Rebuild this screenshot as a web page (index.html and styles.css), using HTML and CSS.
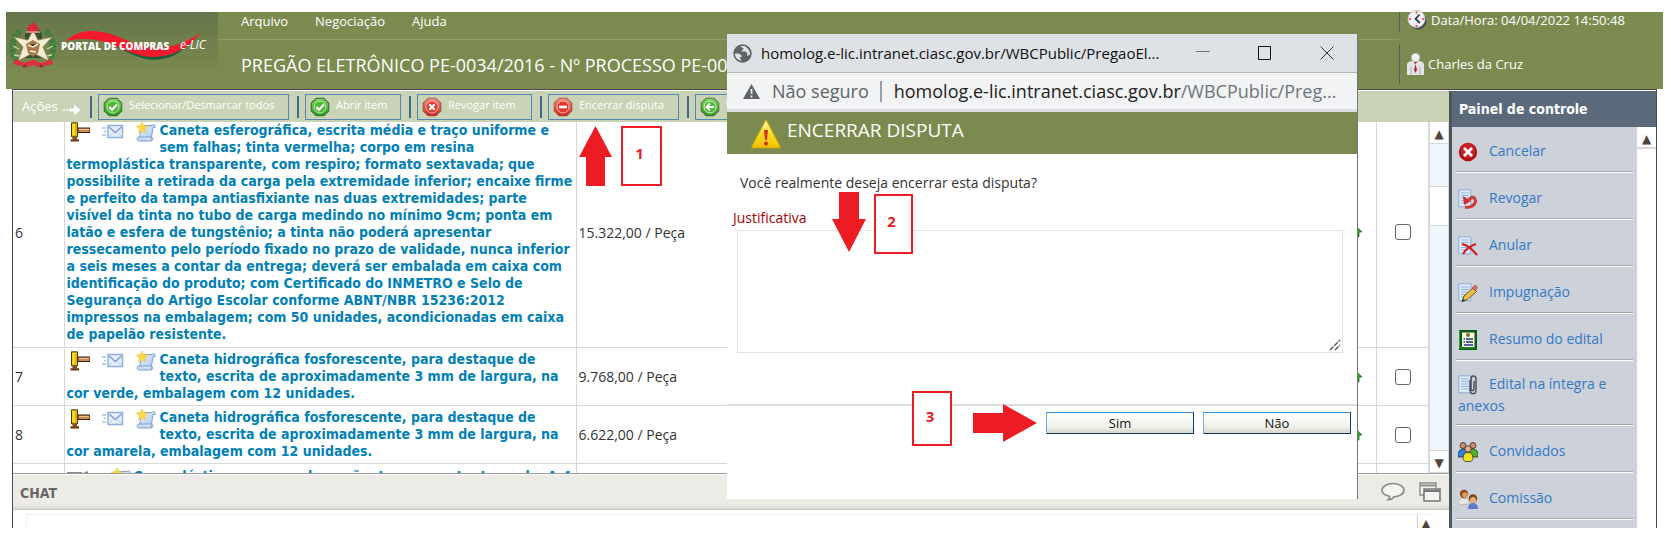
FILE: index.html
```html
<!DOCTYPE html>
<html lang="pt-BR">
<head>
<meta charset="utf-8">
<meta name="viewport" content="width=device-width, initial-scale=1">
<title>Portal de Compras e-LIC</title>
<link rel="stylesheet" href="styles.css">
</head>
<body>
<svg class="defs" aria-hidden="true">
  <defs>
    <linearGradient id="g-green" x1="0" y1="0" x2="0" y2="1"><stop offset="0" stop-color="#7fd35c"/><stop offset="1" stop-color="#2f9a26"/></linearGradient>
    <linearGradient id="g-red" x1="0" y1="0" x2="0" y2="1"><stop offset="0" stop-color="#f79084"/><stop offset="1" stop-color="#d8241c"/></linearGradient>
    <linearGradient id="g-warn" x1="0" y1="0" x2="0" y2="1"><stop offset="0" stop-color="#fff6b0"/><stop offset=".5" stop-color="#f7dc2a"/><stop offset="1" stop-color="#f0bf00"/></linearGradient>
    <linearGradient id="g-page" x1="0" y1="0" x2="1" y2="1"><stop offset="0" stop-color="#e9f2ff"/><stop offset="1" stop-color="#a9c6ee"/></linearGradient>
  </defs>
  <symbol id="gavel" viewBox="0 0 20 20">
    <path d="M8 6h12v4.500H8z" fill="#c98a56" stroke="#3a1c0c"/><path d="M9 7.500h10" stroke="#f0bd8c"/>
    <path d="M1.500 .8h6v14h-6z" fill="#e8b800" stroke="#4a3a00"/><path d="M3.500 2v11" stroke="#ffe23a" stroke-width="2"/>
    <path d="M2.500 15h4.500v2.500H2.500z" fill="#8a4a20"/><path d="M.5 17.300h8.500v2.200H.5z" fill="#6b3212"/>
  </symbol>
  <symbol id="mail" viewBox="0 0 22 16">
    <path d="M0 4h4M2 7.500h2M0 11h4" stroke="#a9c4ea" stroke-width="1.500"/>
    <path d="M6 1.500h14.500v12H6z" fill="#e6f0fd" stroke="#8fb0de" stroke-width="1.500"/>
    <path d="M7 3l6.300 5.500L19.500 3" fill="none" stroke="#7d9fd4" stroke-width="1.500"/><path d="M7 12.500l4-4M19.500 12.500l-4-4" fill="none" stroke="#b4cbec" stroke-width="1"/>
  </symbol>
  <symbol id="scroll" viewBox="0 0 20 20">
    <path d="M5 3.500h11c2-2 4 0 3 2h-2l-1.500 9.500c2 .5 1.500 4-.5 4H3c-2.500 0-2.500-4 0-4h1z" fill="url(#g-page)" stroke="#7f9fd2"/>
    <path d="M3 15h11c2 0 1.500 3.500 0 3.500" fill="#d6e5fa" stroke="#7f9fd2"/>
    <path d="M6 0l1.800 3.600 4 .5-3 2.800.8 4L6 9 2.500 10.900l.7-4-3-2.800 4-.5z" fill="#ffd84a" stroke="#e8b83a" stroke-width=".5"/>
  </symbol>
  <symbol id="ok" viewBox="0 0 20 20">
    <path d="M6 .7h8L19.300 6v8L14 19.300H6L.7 14V6z" fill="#4d5c4a"/><path d="M6.300 1.500h7.400l4.800 4.800v7.400l-4.800 4.800H6.300l-4.800-4.800V6.300z" fill="url(#g-green)" stroke="#2c7a24" stroke-width=".6"/>
    <circle cx="10" cy="10" r="6" fill="#4fb83a" stroke="#b9eaa8" stroke-width="1"/><path d="M6.300 10l2.700 2.800L14 7.600" fill="none" stroke="#fff" stroke-width="2.200"/>
  </symbol>
  <symbol id="back" viewBox="0 0 20 20">
    <path d="M6 .7h8L19.300 6v8L14 19.300H6L.7 14V6z" fill="#4d5c4a"/><path d="M6.300 1.500h7.400l4.800 4.800v7.400l-4.800 4.800H6.300l-4.800-4.800V6.300z" fill="url(#g-green)"/>
    <circle cx="10" cy="10" r="6" fill="#4fb83a" stroke="#d4f3c8"/><path d="M14 10H6.500M10 6.500L6.500 10l3.500 3.500" fill="none" stroke="#fff" stroke-width="2"/>
  </symbol>
  <symbol id="cross" viewBox="0 0 20 20">
    <path d="M6 .7h8L19.300 6v8L14 19.300H6L.7 14V6z" fill="#8d4b46"/><path d="M6.300 1.500h7.400l4.800 4.800v7.400l-4.800 4.800H6.300l-4.800-4.800V6.300z" fill="url(#g-red)"/>
    <circle cx="10" cy="10" r="6" fill="#e2382e" stroke="#f7b5ae"/><path d="M7.300 7.300l5.400 5.400M12.700 7.300l-5.400 5.400" stroke="#fff" stroke-width="2.200"/>
  </symbol>
  <symbol id="minus" viewBox="0 0 20 20">
    <path d="M6 .7h8L19.300 6v8L14 19.300H6L.7 14V6z" fill="#8d4b46"/><path d="M6.300 1.500h7.400l4.800 4.800v7.400l-4.800 4.800H6.300l-4.800-4.800V6.300z" fill="url(#g-red)"/>
    <circle cx="10" cy="10" r="6" fill="#e2382e" stroke="#f7b5ae"/><path d="M6 10h8" stroke="#fff" stroke-width="2.600"/>
  </symbol>
  <symbol id="up-green" viewBox="0 0 12 12"><path d="M6 0l6 6H9v5H3V6H0z" fill="#2fae1c" stroke="#14740c" stroke-width=".8"/></symbol>
  <symbol id="sheet" viewBox="0 0 20 20"><path d="M.8.800h12v17h-12z" fill="#dfeafb" stroke="#8ea9d8"/><path d="M3 4h8M3 6.500h8M3 9h8M3 11.500h8M3 14h8" stroke="#8fb3ea"/></symbol>
</svg>

<div class="app">
  <header class="header">
    <div class="brand">
      <svg width="212" height="77" viewBox="0 0 212 77" role="img" aria-label="Portal de Compras e-LIC">
        <g>
          <path d="M14 19C4 27 4 44 12 50M40 19c9 8 9 25 2 31" fill="none" stroke="#3f7f3c" stroke-width="6" stroke-dasharray="4 1"/>
          <path d="M8 25l6 5M7 34l6 3M8 43l6 1M46 25l-6 5M47 34l-6 3M46 43l-6 1" stroke="#c9dc9c" stroke-width="1.300"/>
          <path d="M19 22l6-9h5l6 9v24H19z" fill="#38522f"/>
          <path d="M27 18l5 10 14-3-9 10 6 14-16-8-15 8 5-14-9-10 14 3z" fill="#f2ecd2" stroke="#8b7c4a" stroke-width=".8"/>
          <path d="M20 32l7-4 7 4-2 9-5 4-5-4z" fill="#a87848"/><path d="M22 33l5 2 5-3M24 39l6 1" stroke="#fff2cf" stroke-width="1.500"/>
          <path d="M21 16l4-4 2-2 2 2 4 4-2 5h-8z" fill="#d8283a"/><path d="M20 20h14" stroke="#ffd4c8"/>
          <path d="M10 47l8 4 9-3 9 3 9-4 2 5-9 2-3 2-8-3-8 3-4-2-8-2z" fill="#e0303f"/>
          <path d="M20 53l-3 2M34 53l3 2" stroke="#3d5528" stroke-width="2"/>
        </g>
        <path d="M66 27C86 15 106 20 124 31c20 12 40 11 58 2-13 14-31 17-46 13-24-7-40-26-70-19z" fill="#17603a"/>
        <path d="M60 29C76 14 98 18 120 28c28 13 54 8 74-7-12 17-34 27-56 23-26-5-40-23-78-15z" fill="#f5192c"/>
        <text x="55" y="38" class="brand-name">PORTAL DE COMPRAS</text>
        <text x="174" y="37" class="brand-tag">e-LIC</text>
      </svg>
    </div>
    <div class="header-mid">
      <nav class="menu" aria-label="Principal"><a href="#">Arquivo</a><a href="#">Negociação</a><a href="#">Ajuda</a></nav>
      <h1 class="title">PREGÃO ELETRÔNICO PE-0034/2016 - Nº PROCESSO PE-0034/2016</h1>
    </div>
    <div class="session">
      <div class="session-row clock">
        <svg width="20" height="20" viewBox="0 0 20 20"><circle cx="11" cy="11" r="8.500" fill="#3d4654"/><circle cx="9.500" cy="9" r="8.500" fill="#f4f4f6" stroke="#c4c6cc"/><path d="M12.500 4.500L8.500 9l4.500 4" fill="none" stroke="#343a44" stroke-width="1.800"/><path d="M9.500 1.500v2M9.500 15v2M2 9h2M15 9h2" stroke="#e33" stroke-width="1.600"/></svg>
        <span>Data/Hora: 04/04/2022 14:50:48</span>
      </div>
      <div class="session-row user">
        <svg width="17" height="23" viewBox="0 0 17 23"><path d="M0 22V12c0-3 3-4 5-4h7c2 0 5 1 5 4v10z" fill="#e4e4e8"/><path d="M4 14v8M13 14v8" stroke="#a9adb5"/><path d="M6.500 9l2 2-1.500 6 1.500 3 1.500-3L8.500 11l2-2z" fill="#b8242c"/><circle cx="8.500" cy="4.500" r="4.200" fill="#f2f2f5" stroke="#b4b9c2"/></svg>
        <span>Charles da Cruz</span>
      </div>
    </div>
  </header>

  <div class="content">
    <main class="work">
      <div class="toolbar">
        <span class="toolbar-label">Ações</span>
        <svg width="20" height="20" viewBox="0 0 20 20"><path d="M1 13h2M4 13h2" stroke="#fff" stroke-width="1.500"/><path d="M7 11.500h5V7.500L18.500 13 12 18.500v-4H7z" fill="#fff"/></svg>
        <i class="sep"></i><button type="button" class="tool t-all"><svg class="ic"><use href="#ok"/></svg>Selecionar/Desmarcar todos</button>
        <i class="sep"></i><button type="button" class="tool t-open"><svg class="ic"><use href="#ok"/></svg>Abrir item</button>
        <i class="sep"></i><button type="button" class="tool t-revoke"><svg class="ic"><use href="#cross"/></svg>Revogar item</button>
        <i class="sep"></i><button type="button" class="tool t-close"><svg class="ic"><use href="#minus"/></svg>Encerrar disputa</button>
        <i class="sep"></i><button type="button" class="tool"><svg class="ic"><use href="#back"/></svg>Voltar</button>
      </div>

      <div class="list">
        <div class="list-view">
          <table class="items">
            <colgroup><col class="c-num"><col class="c-desc"><col class="c-qty"><col class="c-trend"><col class="c-check"></colgroup>
            <tbody>
              <tr class="r6">
                <td>6</td>
                <td class="desc"><span class="marks"><svg class="ic"><use href="#gavel"/></svg><svg class="ic-mail"><use href="#mail"/></svg><svg class="ic"><use href="#scroll"/></svg></span><a href="#">Caneta esferográfica, escrita média e traço uniforme e<br>sem falhas; tinta vermelha; corpo em resina<br>termoplástica transparente, com respiro; formato sextavada; que<br>possibilite a retirada da carga pela extremidade inferior; encaixe firme<br>e perfeito da tampa antiasfixiante nas duas extremidades; parte<br>visível da tinta no tubo de carga medindo no mínimo 9cm; ponta em<br>latão e esfera de tungstênio; a tinta não poderá apresentar<br>ressecamento pelo período fixado no prazo de validade, nunca inferior<br>a seis meses a contar da entrega; deverá ser embalada em caixa com<br>identificação do produto; com Certificado do INMETRO e Selo de<br>Segurança do Artigo Escolar conforme ABNT/NBR 15236:2012<br>impressos na embalagem; com 50 unidades, acondicionadas em caixa<br>de papelão resistente.</a></td>
                <td>15.322,00 / Peça</td>
                <td class="trend"><svg width="12" height="12"><use href="#up-green"/></svg></td>
                <td class="check"><input type="checkbox" aria-label="Selecionar item 6"></td>
              </tr>
              <tr>
                <td>7</td>
                <td class="desc"><span class="marks"><svg class="ic"><use href="#gavel"/></svg><svg class="ic-mail"><use href="#mail"/></svg><svg class="ic"><use href="#scroll"/></svg></span><a href="#">Caneta hidrográfica fosforescente, para destaque de<br>texto, escrita de aproximadamente 3 mm de largura, na<br>cor verde, embalagem com 12 unidades.</a></td>
                <td>9.768,00 / Peça</td>
                <td class="trend"><svg width="12" height="12"><use href="#up-green"/></svg></td>
                <td class="check"><input type="checkbox" aria-label="Selecionar item 7"></td>
              </tr>
              <tr>
                <td>8</td>
                <td class="desc"><span class="marks"><svg class="ic"><use href="#gavel"/></svg><svg class="ic-mail"><use href="#mail"/></svg><svg class="ic"><use href="#scroll"/></svg></span><a href="#">Caneta hidrográfica fosforescente, para destaque de<br>texto, escrita de aproximadamente 3 mm de largura, na<br>cor amarela, embalagem com 12 unidades.</a></td>
                <td>6.622,00 / Peça</td>
                <td class="trend"><svg width="12" height="12"><use href="#up-green"/></svg></td>
                <td class="check"><input type="checkbox" aria-label="Selecionar item 8"></td>
              </tr>
              <tr class="last">
                <td></td>
                <td class="desc"><span class="marks short"><svg width="22" height="14" viewBox="0 0 22 14"><path d="M0 2h14v6H0M14 4l7-3" fill="none" stroke="#8a8a8a" stroke-width="2"/></svg><svg class="ic"><use href="#scroll"/></svg></span><a href="#">Capa plástica para encadernação, transparente, tamanho A-4,</a></td>
                <td></td><td></td><td></td>
              </tr>
            </tbody>
          </table>
        </div>
        <div class="scrollbar" aria-hidden="true"><span class="sb-btn">▲</span><span class="sb-gap"></span><span class="sb-thumb"></span><span class="sb-track"></span><span class="sb-btn">▼</span></div>
      </div>

      <section class="chat">
        <div class="chat-bar">
          <h2>CHAT</h2>
          <svg width="24" height="20" viewBox="0 0 24 20"><path d="M12 1.500c6 0 11 3 11 6.700s-5 6.600-10 6.600c-1 1.500-3 3-6 3 1.500-1.200 2-2.500 1.500-3.600C4 13.300 1 11.300 1 8.200 1 4.500 6 1.500 12 1.500z" fill="#f4f4f0" stroke="#8b8b88" stroke-width="1.600"/></svg>
          <svg width="22" height="20" viewBox="0 0 22 20"><path d="M1 1h16v12H1z" fill="#f4f4f0" stroke="#8b8b88" stroke-width="1.400"/><path d="M1 3.500h16" stroke="#8b8b88" stroke-width="2"/><path d="M5 7h16v12H5z" fill="#f4f4f0" stroke="#777" stroke-width="1.600"/><path d="M5 9h16" stroke="#777" stroke-width="2"/></svg>
        </div>
        <div class="chat-body"><div class="chat-log"><span class="chat-scroll" aria-hidden="true">▲</span></div></div>
      </section>
    </main>

    <aside class="panel">
      <h2 class="panel-title">Painel de controle</h2>
      <div class="panel-body">
        <nav class="panel-nav" aria-label="Painel de controle">
          <a href="#"><svg viewBox="0 0 20 20"><circle cx="10" cy="10" r="9.200" fill="#b01015"/><circle cx="10" cy="9" r="7.500" fill="#c9232a"/><path d="M6 6l8 8M14 6l-8 8" stroke="#fff" stroke-width="2.800"/></svg>Cancelar</a>
          <a href="#"><svg viewBox="0 0 20 20"><use href="#sheet"/><path d="M7 18c7 1 12-3 10-8-1-3-4-2-6 1" fill="none" stroke="#d03a34" stroke-width="3"/><path d="M5 7l1 9 7-4z" fill="#d42a24"/></svg>Revogar</a>
          <a href="#"><svg viewBox="0 0 20 20"><use href="#sheet"/><path d="M4 8c5 1 11 6 15 11M18 8C12 10 7 14 5 18" fill="none" stroke="#d11f1f" stroke-width="2.200"/></svg>Anular</a>
          <a href="#"><svg viewBox="0 0 20 20"><use href="#sheet"/><path d="M4 18.500l2-5.500 9-8 3.500 3.500-9 8z" fill="#f0c040" stroke="#5a4414" stroke-width=".9"/><path d="M14 5l2.500-2.500c1-.8 3.500 1.500 2.500 3L17 8z" fill="#e46a6a" stroke="#8a4040" stroke-width=".6"/><path d="M4 19l1-3.500L7.500 17.500z" fill="#333"/></svg>Impugnação</a>
          <a href="#"><svg viewBox="0 0 20 20"><path d="M1 0h18v20H1z" fill="#0b5a12"/><path d="M4 2.500h12.500v14.500H4z" fill="#fffbe0"/><path d="M1.500 1v17h15.500" fill="none" stroke="#2fa02f"/><circle cx="10" cy="5" r="2" fill="#7a7430"/><path d="M8 9h7M8 12h7M6 15h9" stroke="#1d2d8a" stroke-width="1.600"/><path d="M5.500 8.800h1.500M5.500 12h1.500" stroke="#1d2d8a" stroke-width="1.500"/></svg>Resumo do edital</a>
          <a href="#" class="tall"><svg viewBox="0 0 20 20"><use href="#sheet"/><path d="M12 5v10c0 5 6 5 6 0V4c0-4-5-4-5 0v10c0 2 3 2 3 0V6" fill="none" stroke="#4c5258" stroke-width="1.500"/></svg>Edital na íntegra e anexos</a>
          <a href="#"><svg viewBox="0 0 20 20"><g stroke="#2a2018" stroke-width=".7"><circle cx="5" cy="3.500" r="3" fill="#c98a64"/><circle cx="15" cy="3.500" r="3" fill="#c98a64"/><path d="M0 15c0-6 2-8 5-8s4 2 4 5v3z" fill="#2f7fe0"/><path d="M20 15c0-6-2-8-5-8s-4 2-4 5v3z" fill="#4fb42c"/><circle cx="10" cy="7" r="3.200" fill="#e4ae86"/><path d="M5 17c0-5 2-6.500 5-6.500s5 1.500 5 6.500l-2 2.500H7z" fill="#f0e020"/></g></svg>Convidados</a>
          <a href="#"><svg viewBox="0 0 20 20"><path d="M0 16c0-5 2-7 6-7s5 2 5 6z" fill="#e8e4e0" stroke="#aaa" stroke-width=".6"/><circle cx="6" cy="5" r="4.200" fill="#8a4a1c"/><circle cx="7" cy="6" r="2.800" fill="#e09a60"/><path d="M10 20c0-4 2-6 5-6s5 2 5 6z" fill="#5a7cc8"/><circle cx="15" cy="9.500" r="4.200" fill="#7a4018"/><circle cx="15" cy="11" r="3" fill="#eab078"/></svg>Comissão</a>
        </nav>
        <div class="panel-scroll" aria-hidden="true"><span>▲</span></div>
      </div>
    </aside>
  </div>
</div>

<section class="popup" role="dialog" aria-label="Encerrar disputa">
  <div class="win-title">
    <svg width="19" height="19" viewBox="0 0 20 20"><circle cx="10" cy="10" r="9.700" fill="#5f6368"/><path d="M2 10h4l3 2v2h-2l2 3.500C5 17.500 2 14 2 10zM7 3c2 0 2 1 4 1.500 1 1-2 1.500-2 3.500h4l2 1.500v3l3-1.500c0-4-2-6.500-5-8.500-2-.6-4-.6-6 1z" fill="#dee1e6"/></svg>
    <span class="win-name">homolog.e-lic.intranet.ciasc.gov.br/WBCPublic/PregaoEl...</span>
    <span class="win-btns">
      <button type="button" aria-label="Minimizar"><svg width="14" height="14"><path d="M0 5.500h14" stroke="#777"/></svg></button>
      <button type="button" aria-label="Maximizar"><svg width="14" height="14"><path d="M.5.500h12v13H.5z" fill="none" stroke="#111"/></svg></button>
      <button type="button" aria-label="Fechar"><svg width="14" height="14"><path d="M.5.500l13 13M13.500.500l-13 13" stroke="#333"/></svg></button>
    </span>
  </div>
  <div class="win-url">
    <svg width="17" height="15" viewBox="0 0 17 15"><path d="M8.500 0L17 15H0z" fill="#5f6368"/><path d="M8.500 5v5M8.500 11.500v2" stroke="#f1f3f4" stroke-width="1.800"/></svg>
    <span class="unsafe">Não seguro</span><i></i><span class="url">homolog.e-lic.intranet.ciasc.gov.br<span>/WBCPublic/Preg...</span></span>
  </div>
  <div class="dlg-head">
    <svg width="30" height="31" viewBox="0 0 30 31"><path d="M15 1.500L29 28c.5 1.500 0 2-1.500 2H2.500C1 30 .5 29.500 1 28z" fill="url(#g-warn)" stroke="#c9a400"/><path d="M13 12h4l-1 10h-2z" fill="#d83020"/><circle cx="15" cy="25.500" r="2" fill="#d83020"/></svg>
    <h2>ENCERRAR DISPUTA</h2>
  </div>
  <form class="dlg">
    <p>Você realmente deseja encerrar esta disputa?</p>
    <label for="just">Justificativa</label>
    <div class="area"><textarea id="just"></textarea><svg width="12" height="12"><path d="M1 11L11 1M6 11l5-5" stroke="#555" stroke-width="1.300" stroke-dasharray="5 1"/></svg></div>
    <div class="dlg-actions"><button type="button">Sim</button><button type="button">Não</button></div>
  </form>
</section>

<div class="note n1">1</div><div class="note n2">2</div><div class="note n3">3</div>
<svg class="arrow a1" width="34" height="60" viewBox="0 0 34 60"><path d="M16.500 0L33 31h-7v29H7V31H0z"/></svg>
<svg class="arrow a2" width="34" height="60" viewBox="0 0 34 60"><path d="M7 0h20v27h7L17 60 0 27h7z"/></svg>
<svg class="arrow a3" width="64" height="38" viewBox="0 0 64 38"><path d="M0 9h30V0l34 19-34 19v-9H0z"/></svg>
</body>
</html>
```
FILE: styles.css
```css
* { box-sizing: border-box; }
body {
  margin: 0;
  position: relative;
  height: 100vh;
  padding: 12px 8px 10px 6px;
  overflow: hidden;
  background: #fff;
  color: #333;
  font: 14px/17px "Open Sans", "Noto Sans", sans-serif;
}
h1, h2, p { margin: 0; font-weight: 400; }
a { text-decoration: none; color: inherit; }
button, textarea { font: inherit; }
svg { flex: none; display: block; }
.defs { position: absolute; width: 0; height: 0; }
.ic { width: 20px; height: 20px; }
.ic-mail { width: 22px; height: 16px; }

.app { height: 100%; display: flex; flex-direction: column; }

.header { display: flex; height: 77px; flex: none; background: #7b8a4f; color: #fff; font-size: 13px; }
.brand { width: 212px; background: linear-gradient(#66754a, #7b8a4f 80%); }
.brand-name { font: 800 10px "Open Sans", sans-serif; fill: #fff; }
.brand-tag { font: italic 12px "Open Sans", sans-serif; fill: #fff; }
.header-mid { flex: 1; min-width: 0; }
.menu { display: flex; gap: 27px; height: 28px; padding: 1px 0 0 23px; border-bottom: 1px solid #8e9e60; }
.title { padding: 12px 0 0 23px; font-size: 18px; line-height: 26px; white-space: nowrap; overflow: hidden; }
.session { width: 264px; display: flex; flex-direction: column; gap: 13px; }
.session-row { display: flex; align-items: center; gap: 4px; padding-left: 7px; border-left: 1px solid #4f5d66; white-space: nowrap; }
.clock { height: 20px; padding-bottom: 4px; }
.user { height: 39px; }

.content { flex: 1; min-height: 0; display: flex; margin: 0 6px; border: 1px solid #4a4a50; border-bottom: 0; padding-top: 1px; }
.work { flex: 1; min-width: 0; display: flex; flex-direction: column; }

.toolbar { flex: none; display: flex; align-items: center; gap: 6px; height: 31px; padding-left: 9px; background: #c9d4b6; color: #fff; white-space: nowrap; overflow: hidden; }
.toolbar-label { width: 34px; font-size: 13px; }
.sep { flex: none; width: 2px; height: 22px; background: #45688c; margin-left: 2px; }
.tool { flex: none; display: flex; align-items: center; gap: 6px; height: 26px; padding: 0 4px 4px; border: 1px solid #5487b4; background: transparent; color: #fff; font-size: 11px; line-height: 17px; }
.tool .ic { margin-top: 4px; }
.t-all { width: 191px; }
.t-open { width: 96px; }
.t-revoke { width: 115px; }
.t-close { width: 131px; }

.list { flex: 1; min-height: 0; display: flex; }
.list-view { flex: 1; min-width: 0; overflow: hidden; }
.items { width: 100%; margin-top: -6px; table-layout: fixed; border-collapse: collapse; }
.items td { height: 58px; padding: 0 2px; border: 1px solid #d8d8d8; border-left: 0; vertical-align: middle; white-space: nowrap; }
.items .r6 td { height: 231px; }
.items .last td { vertical-align: top; padding-top: 4px; }
.items .desc { color: #0080b8; font: bold 14px/17px "DejaVu Sans Condensed", "DejaVu Sans", sans-serif; }
.c-num { width: 51px; }
.c-desc { width: 512px; }
.c-trend { width: 30px; }
.c-check { width: 52px; }
.items td.check { text-align: center; }
.items td.trend { padding: 0 0 0 3px; }
.marks { float: left; display: flex; align-items: center; width: 93px; height: 20px; gap: 12px; padding-left: 3px; margin-bottom: 14px; }
.marks.short { width: 67px; padding: 0; gap: 22px; }
.check input { appearance: none; display: block; width: 16px; height: 16px; margin: 0 auto; border: 1px solid #666; border-radius: 3px; background: #fff; }

.scrollbar { width: 20px; display: flex; flex-direction: column; background: #eef6ff; border-left: 1px solid #d8d8d8; }
.scrollbar span { border: 1px solid #d8d8d8; border-width: 0 1px 1px 0; background: #fff; }
.scrollbar .sb-btn { height: 22px; font: 12px/24px "DejaVu Sans", sans-serif; text-align: center; color: #4d4444; }
.scrollbar .sb-gap { height: 43px; background: #eef6ff; }
.scrollbar .sb-thumb { height: 39px; }
.scrollbar .sb-track { flex: 1; background: #eef6ff; }

.chat { flex: none; height: 55px; border-top: 1px solid #999; }
.chat-bar { display: flex; align-items: center; gap: 14px; height: 35px; margin-top: 1px; padding: 0 8px 0 7px; background: linear-gradient(#ecebe6 85%, #d8d7d0); border-bottom: 1px solid #c8c8c2; }
.chat-bar h2 { flex: 1; padding-top: 2px; font: bold 14px/17px "DejaVu Sans Condensed", sans-serif; color: #666; }
.chat-body { height: 18px; padding: 4px 15px 0 13px; overflow: hidden; }
.chat-log { height: 40px; border: 1px solid #eee; border-right: 0; display: flex; justify-content: flex-end; }
.chat-scroll { width: 17px; border-left: 1px solid #ccc; font: 11px/17px "DejaVu Sans", sans-serif; text-align: center; color: #4d4444; }

.panel { width: 207px; display: flex; flex-direction: column; border-left: 3px solid #4c545c; }
.panel-title { flex: none; height: 36px; padding-left: 7px; font: bold 14px/36px "DejaVu Sans Condensed", sans-serif; color: #fff; background: #5a6a7a; }
.panel-body { flex: 1; min-height: 0; display: flex; overflow: hidden; }
.panel-nav { flex: 1; padding: 0 4px; background: #cdd1d9; overflow: hidden; }
.panel-nav a { display: block; height: 47px; padding: 14px 0 0 2px; border-bottom: 1px solid #fff; box-shadow: inset 0 -1px #aaa; color: #3279c8; font-size: 14px; line-height: 21px; }
.panel-nav a:first-child { height: 46px; padding-top: 13px; }
.panel-nav .tall { height: 65px; padding-top: 12px; }
.panel-nav svg { display: inline-block; width: 20px; height: 20px; margin-right: 11px; vertical-align: middle; }
.panel-scroll { width: 19px; background: #fff; }
.panel-scroll span { display: block; height: 22px; border: 1px solid #d8d8d8; border-width: 0 0 2px; font: 12px/24px "DejaVu Sans", sans-serif; text-align: center; color: #4d4444; }

.popup { position: absolute; left: 727px; top: 34px; width: 631px; height: 465px; background: #fff; border-right: 1px solid #777; display: flex; flex-direction: column; white-space: nowrap; }
.win-title { display: flex; align-items: center; height: 39px; padding: 0 23px 0 6px; gap: 9px; background: #dee1e6; border-bottom: 1px solid #b4b6ba; color: #111; font-size: 15px; line-height: 22px; }
.win-name { flex: 1; min-width: 0; }
.win-btns { display: flex; gap: 48px; }
.win-btns button { padding: 0; border: 0; background: none; }
.win-url { display: flex; align-items: center; height: 39px; padding-left: 16px; background: #f1f3f4; border-bottom: 3px solid #dcdde0; font-size: 18px; line-height: 24px; color: #5f6368; }
.unsafe { margin-left: 12px; }
.win-url i { width: 2px; height: 21px; margin: 0 12px 0 11px; background: #9a9da2; }
.url { color: #222; }
.url span { color: #70757a; }
.dlg-head { display: flex; align-items: center; gap: 6px; height: 42px; padding-left: 24px; background: #7b8a4f; color: #fff; }
.dlg-head h2 { font-size: 19px; line-height: 26px; padding-bottom: 6px; }
.dlg { flex: 1; display: flex; flex-direction: column; }
.dlg p { padding: 20px 0 0 13px; }
.dlg label { padding: 18px 0 1px 6px; color: #a00; }
.area { position: relative; height: 123px; margin: 3px 14px 0 10px; }
.area textarea { display: block; width: 100%; height: 100%; border: 1px solid #e4e4e4; resize: none; background: #fff; }
.area svg { position: absolute; right: 2px; bottom: 2px; }
.dlg-actions { display: flex; justify-content: flex-end; gap: 9px; margin-top: 51px; padding: 6px 6px 0 0; border-top: 2px solid #dcdcdc; }
.dlg-actions button { width: 148px; height: 22px; padding: 0; border: 1px solid; border-color: #2f8ad8 #0c3c68 #0c3c68 #6cb0e8; background: linear-gradient(#fff, #f0f0ea 70%, #d8d4c8); color: #111; font-size: 13px; line-height: 18px; }

.note { position: absolute; width: 41px; height: 60px; border: 2px solid #ed1c24; background: #fff; color: #ed1c24; padding-right: 4px; font: bold 15px/50px "Open Sans", sans-serif; text-align: center; }
.n1 { left: 621px; top: 126px; }
.n2 { left: 874px; top: 194px; width: 39px; }
.n3 { left: 912px; top: 391px; width: 40px; height: 55px; line-height: 46px; }
.arrow { position: absolute; fill: #ed1c24; }
.a1 { left: 579px; top: 126px; }
.a2 { left: 832px; top: 192px; }
.a3 { left: 973px; top: 404px; }
```
